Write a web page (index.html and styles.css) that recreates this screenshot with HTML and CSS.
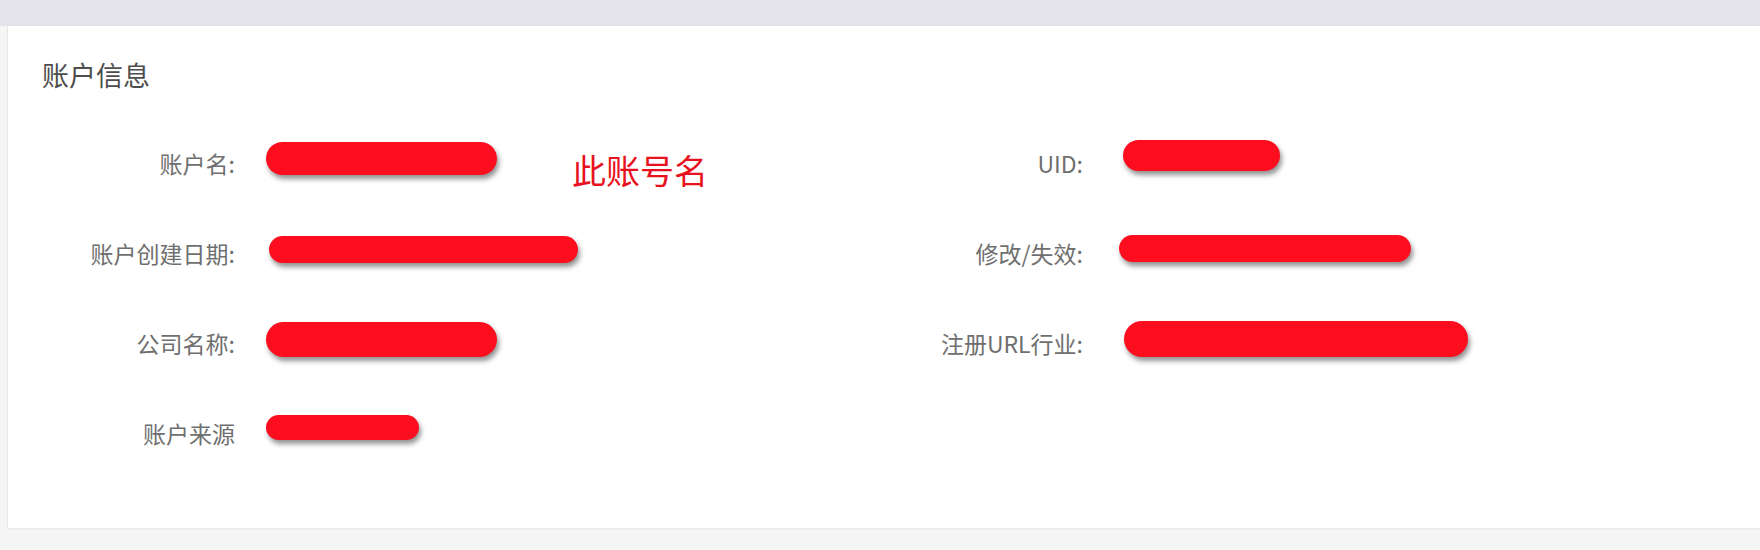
FILE: index.html
```html
<!DOCTYPE html>
<html lang="zh-CN">

<head>
  <meta charset="UTF-8">
  <title>账户信息</title>
  <meta name="viewport" content="width=device-width, initial-scale=1.0">
  <link rel="stylesheet" href="styles.css">
</head>

<body>
<div class="topbar"></div>

<div class="page">
  <section class="card">
    <h2 class="card-title">账户信息</h2>

    <!-- 两列信息，遮挡部分用红色标记 -->
    <div class="info-grid">
      <div class="info-item">
        <span class="info-label">账户名:</span>
        <div class="info-value">
          <i class="mark" style="left:-1px;top:24px;width:231px;height:33px"></i>
          <span class="note">此账号名</span>
        </div>
      </div>
      <div class="info-item">
        <span class="info-label">UID:</span>
        <div class="info-value">
          <i class="mark" style="left:8px;top:22px;width:157px;height:31px"></i>
        </div>
      </div>

      <div class="info-item">
        <span class="info-label">账户创建日期:</span>
        <div class="info-value">
          <i class="mark" style="left:2px;top:28px;width:309px;height:27px"></i>
        </div>
      </div>
      <div class="info-item">
        <span class="info-label">修改/失效:</span>
        <div class="info-value">
          <i class="mark" style="left:4px;top:27px;width:292px;height:27px"></i>
        </div>
      </div>

      <div class="info-item">
        <span class="info-label">公司名称:</span>
        <div class="info-value">
          <i class="mark" style="left:-1px;top:24px;width:231px;height:35px"></i>
        </div>
      </div>
      <div class="info-item">
        <span class="info-label">注册URL行业:</span>
        <div class="info-value">
          <i class="mark" style="left:9px;top:23px;width:344px;height:36px"></i>
        </div>
      </div>

      <div class="info-item">
        <span class="info-label">账户来源</span>
        <div class="info-value">
          <i class="mark" style="left:-1px;top:27px;width:153px;height:25px"></i>
        </div>
      </div>
    </div>
  </section>
</div>
</body>
</html>
```

FILE: styles.css
```css
body {
  margin: 0;
  padding: 0;
  font-family: "Noto Sans CJK SC", "Noto Sans", sans-serif;
  background-color: #f5f5f5;
  min-height: 550px;
  overflow: hidden;
}

.topbar {
  height: 26px;
  background-color: #e4e3e9;
}

.page {
  padding-left: 7px;
}

.card {
  background-color: #fff;
  border-left: 1px solid #e8e8e8;
  border-bottom: 2px solid #ececec;
  padding: 30px 0 50px 34px;
}

.card-title {
  margin: 0 0 24px;
  font-size: 27px;
  line-height: 38px;
  font-weight: normal;
  color: #4d4d4d;
}

.info-grid {
  display: grid;
  grid-template-columns: 848px 1fr;
  grid-auto-rows: 90px;
}

.info-item {
  display: grid;
  grid-template-columns: 193px 1fr;
  column-gap: 32px;
  align-items: center;
}

.info-label {
  text-align: right;
  font-size: 23px;
  line-height: 30px;
  color: #6f6f6f;
}

.info-value {
  position: relative;
  align-self: stretch;
  display: flex;
  align-items: center;
}

/* 红色遮挡标记 */
.mark {
  position: absolute;
  display: block;
  background-color: #fc0e1f;
  border-radius: 999px;
  box-shadow: 2px 4px 5px rgba(40, 40, 40, 0.5);
}

.note {
  margin-left: 305px;
  margin-top: 13px;
  font-size: 34px;
  line-height: 34px;
  color: #e8121e;
}
```
